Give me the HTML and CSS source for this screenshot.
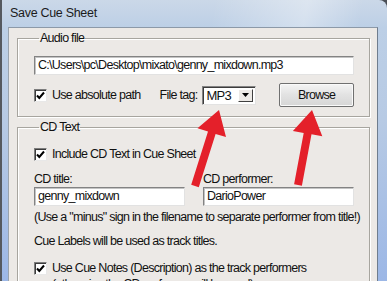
FILE: index.html
```html
<!DOCTYPE html>
<html lang="en">
<head>
  <meta charset="UTF-8" />
  <title>Save Cue Sheet</title>
  <link rel="stylesheet" href="styles.css">
</head>
<body>
  <div class="window">
    <div class="titlebar">Save Cue Sheet</div>
    <div class="client">
      <fieldset class="group audio">
        <legend>Audio file</legend>
        <div class="field path">C:\Users\pc\Desktop\mixato\genny_mixdown.mp3</div>
        <div class="row">
          <label class="check abs">
            <span class="box"><svg width="11" height="11" viewBox="0 0 11 11"><path d="M2 5.5 L4.3 8 L9 2.5" fill="none" stroke="#000" stroke-width="2"/></svg></span>
            Use absolute path
          </label>
          <span class="tag-label">File tag:</span>
          <div class="combo">
            <span class="combo-text">MP3</span>
            <span class="drop"><svg width="7" height="4" viewBox="0 0 7 4"><path d="M0 0 H7 L3.5 4 Z" fill="#000"/></svg></span>
          </div>
          <div class="button">Browse</div>
        </div>
      </fieldset>

      <fieldset class="group cdtext">
        <legend>CD Text</legend>
        <label class="check">
          <span class="box"><svg width="11" height="11" viewBox="0 0 11 11"><path d="M2 5.5 L4.3 8 L9 2.5" fill="none" stroke="#000" stroke-width="2"/></svg></span>
          Include CD Text in Cue Sheet
        </label>
        <div class="pair">
          <div>
            <div class="caption">CD title:</div>
            <div class="field">genny_mixdown</div>
          </div>
          <div>
            <div class="caption">CD performer:</div>
            <div class="field">DarioPower</div>
          </div>
        </div>
        <p class="note">(Use a "minus" sign in the filename to separate performer from title!)</p>
        <p class="note labels">Cue Labels will be used as track titles.</p>
        <label class="check notes">
          <span class="box"><svg width="11" height="11" viewBox="0 0 11 11"><path d="M2 5.5 L4.3 8 L9 2.5" fill="none" stroke="#000" stroke-width="2"/></svg></span>
          Use Cue Notes (Description) as the track performers
        </label>
        <p class="note sub">(otherwise the CD performer will be used)</p>
      </fieldset>
    </div>
  </div>

  <!-- red arrows drawn over the dialog -->
  <svg class="arrows" width="387" height="281" viewBox="0 0 387 281">
    <polygon fill="#e4202a" points="219,110 226,137 215.6,134 198.8,187.2 191.2,184.8 208,131.6 197.5,128.3"/>
    <polygon fill="#e4202a" points="312,110 322.3,136.3 311.5,134.3 301.9,185.7 294.1,184.3 303.7,132.9 292.9,130.9"/>
  </svg>
</body>
</html>
```

FILE: styles.css
```css
* {
  box-sizing: border-box;
}
body {
  margin: 0;
  width: 387px;
  height: 281px;
  overflow: hidden;
  position: relative;
  background: #4b4f56;
  font-family: "Liberation Sans", Arial, sans-serif;
  font-size: 12.5px;
  letter-spacing: -0.72px;
  color: #111;
}
.window {
  height: 281px;
  border-left: 2px solid #55595f;
  border-top-right-radius: 8px;
  padding: 0 9px 0 6px;
  background: linear-gradient(to bottom, #cbd8e8 0, #bccfe6 28px, #b7cae4 120px, #9cb7e6 281px);
}
.titlebar {
  height: 27px;
  line-height: 27px;
  padding-left: 2px;
  font-size: 12.5px;
  letter-spacing: -0.3px;
  color: #1b1b1b;
  background: linear-gradient(100deg, transparent 55%, rgba(255, 255, 255, 0.35) 80%, transparent 95%);
}
.client {
  height: 254px;
  background: #ece9e6;
  border-top: 1px solid #8c99a8;
  border-left: 1px solid #9aa3ad;
  border-right: 1px solid #6f7d8e;
  padding: 2px 7px 0 8px;
}

/* group boxes */
.group {
  margin: 0;
  border: 1px solid #a7a59f;
  box-shadow: inset 1px 1px #fff, 1px 1px #fff;
  padding: 0 15px 9px 16px;
  min-width: 0;
}
.group legend {
  padding: 0 1px;
  margin-left: 5px;
  line-height: 16px;
}
.cdtext {
  margin-top: 2px;
  padding-bottom: 20px;
}

/* text boxes */
.field {
  height: 19px;
  line-height: 16px;
  padding: 0 3px;
  background: #fff;
  border: 1px solid;
  border-color: #838383 #e2e2e2 #e2e2e2 #838383;
  box-shadow: inset 1px 1px #c4c4c4;
  white-space: nowrap;
  overflow: hidden;
}
.path {
  margin-top: 10px;
}

.row {
  display: flex;
  align-items: center;
  margin-top: 8px;
  height: 24px;
  white-space: nowrap;
}
.check {
  display: flex;
  align-items: center;
  line-height: 16px;
  white-space: nowrap;
}
.box {
  width: 13px;
  height: 13px;
  margin-right: 5px;
  background: #fff;
  border: 1px solid;
  border-color: #7d7d7d #e8e8e8 #e8e8e8 #7d7d7d;
  box-shadow: inset 1px 1px #3c3c3c;
  display: flex;
  align-items: center;
  justify-content: center;
}
.abs {
  width: 126px;
}
.tag-label {
  width: 43px;
}
.combo {
  width: 54px;
  height: 19px;
  display: flex;
  background: #fff;
  border: 1px solid;
  border-color: #838383 #e2e2e2 #e2e2e2 #838383;
  box-shadow: inset 1px 1px #3c3c3c;
  padding: 2px 2px 2px 3px;
  margin-right: 23px;
}
.combo-text {
  flex: 1;
  line-height: 14px;
  font-size: 13px;
}
.drop {
  width: 15px;
  background: #ece9e6;
  border: 1px solid;
  border-color: #fff #404040 #404040 #fff;
  display: flex;
  align-items: center;
  justify-content: center;
}
.button {
  width: 75px;
  height: 24px;
  line-height: 22px;
  text-align: center;
  border: 1px solid #707070;
  border-radius: 2px;
  background: linear-gradient(to bottom, #f4f4f4, #e2e2e2 50%, #d6d6d6);
  box-shadow: inset 0 0 0 1px #fafafa;
}

.cdtext > .check {
  margin-top: 11px;
}
.pair {
  display: grid;
  grid-template-columns: 151px 151px;
  column-gap: 18px;
  margin-top: 9px;
}
.caption {
  line-height: 16px;
}
.note {
  margin: 3px 0 0;
  line-height: 16px;
  white-space: nowrap;
}
.labels {
  margin-top: 8px;
}
.notes {
  margin-top: 9px;
}
.sub {
  margin: 0 0 0 18px;
}

.arrows {
  position: absolute;
  top: 0;
  left: 0;
  pointer-events: none;
}
```
